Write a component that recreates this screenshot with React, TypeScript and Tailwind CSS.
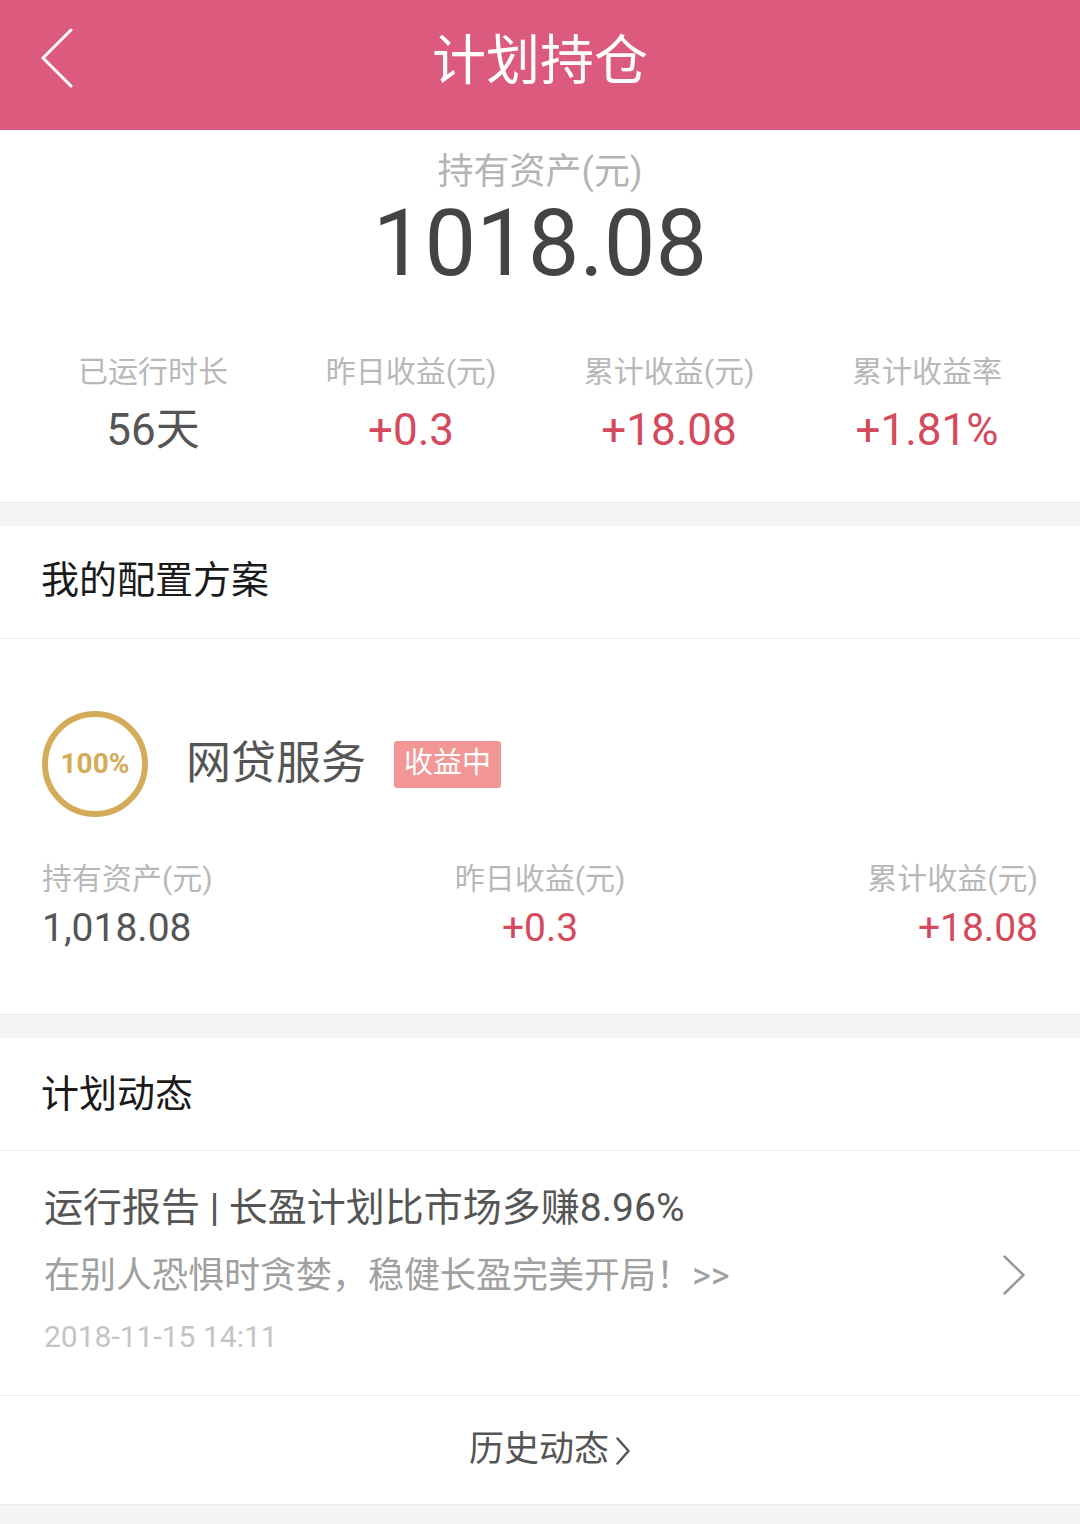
import React from "react";

const stats = [
  { label: "已运行时长", value: "56天", red: false },
  { label: "昨日收益(元)", value: "+0.3", red: true },
  { label: "累计收益(元)", value: "+18.08", red: true },
  { label: "累计收益率", value: "+1.81%", red: true },
];

const BackIcon = () => (
  <svg width="36" height="60" viewBox="0 0 36 60" fill="none">
    <path d="M31 2 L3 30 L31 58" stroke="#fff" strokeWidth="3" strokeLinecap="round" strokeLinejoin="round" />
  </svg>
);

const ChevronRight = ({ w, h, color, sw }: { w: number; h: number; color: string; sw: number }) => (
  <svg width={w} height={h} viewBox={`0 0 ${w} ${h}`} fill="none">
    <path
      d={`M${sw} ${sw} L${w - sw} ${h / 2} L${sw} ${h - sw}`}
      stroke={color}
      strokeWidth={sw}
      strokeLinecap="round"
      strokeLinejoin="round"
    />
  </svg>
);

export default function App() {
  return (
    <div className="w-[1080px] min-h-[1524px] bg-[#f4f4f4] font-['Roboto','Noto_Sans_CJK_SC',sans-serif]">
      {/* header */}
      <div className="relative h-[130px] bg-[#dc5a7e] flex items-center justify-center">
        <div className="absolute left-[40px] top-[28px]">
          <BackIcon />
        </div>
        <h1 className="text-[54px] leading-none text-white -mt-[6px]">计划持仓</h1>
      </div>

      {/* summary */}
      <div className="bg-white pt-[20px] pb-[44px] border-b border-[#ececec]">
        <p className="text-center text-[36px] leading-[44px] text-[#b4b4b4]">持有资产(元)</p>
        <p className="text-center text-[92px] leading-[100px] text-[#444]">1018.08</p>
        <div className="grid grid-cols-4 px-[24px] mt-[58px]">
          {stats.map((s) => (
            <div key={s.label} className="flex flex-col items-center">
              <span className="text-[30px] leading-[40px] text-[#b8b8b8]">{s.label}</span>
              <span className={`text-[44px] leading-[56px] mt-[10px] ${s.red ? "text-[#d44a5c]" : "text-[#555]"}`}>
                {s.value}
              </span>
            </div>
          ))}
        </div>
      </div>

      <div className="h-[23px]" />

      {/* my plan */}
      <div className="bg-white border-b border-[#ececec]">
        <div className="h-[113px] px-[41px] flex items-center border-b border-[#ececec]">
          <h2 className="text-[38px] text-[#1a1a1a] -mt-[4px]">我的配置方案</h2>
        </div>
        <div className="px-[42px] pt-[72px] pb-[61px]">
          <div className="flex items-center h-[106px]">
            <div className="w-[106px] h-[106px] rounded-full border-[6px] border-[#d4ab58] flex items-center justify-center">
              <span className="text-[28px] font-bold text-[#d4ab58]">100%</span>
            </div>
            <span className="ml-[38px] text-[45px] text-[#555]">网贷服务</span>
            <span className="ml-[28px] h-[47px] px-[10px] rounded-[3px] bg-[#f29796] text-white text-[29px] flex items-center">
              收益中
            </span>
          </div>
          <div className="grid grid-cols-3 mt-[42px]">
            <div className="flex flex-col items-start">
              <span className="text-[30px] leading-[40px] text-[#b8b8b8]">持有资产(元)</span>
              <span className="text-[39px] leading-[50px] mt-[4px] text-[#555]">1,018.08</span>
            </div>
            <div className="flex flex-col items-center">
              <span className="text-[30px] leading-[40px] text-[#b8b8b8]">昨日收益(元)</span>
              <span className="text-[39px] leading-[50px] mt-[4px] text-[#d44a5c]">+0.3</span>
            </div>
            <div className="flex flex-col items-end">
              <span className="text-[30px] leading-[40px] text-[#b8b8b8]">累计收益(元)</span>
              <span className="text-[39px] leading-[50px] mt-[4px] text-[#d44a5c]">+18.08</span>
            </div>
          </div>
        </div>
      </div>

      <div className="h-[23px]" />

      {/* plan news */}
      <div className="bg-white border-b border-[#ececec]">
        <div className="h-[113px] px-[41px] flex items-center border-b border-[#ececec]">
          <h2 className="text-[38px] text-[#1a1a1a]">计划动态</h2>
        </div>
        <div className="flex items-center pl-[44px] pr-[54px] pt-[32px] pb-[40px] border-b border-[#ececec]">
          <div className="flex-1 flex flex-col">
            <span className="text-[39px] leading-[50px] text-[#555]">运行报告 | 长盈计划比市场多赚8.96%</span>
            <span className="text-[36px] leading-[46px] mt-[20px] text-[#a0a0a0]">
              在别人恐惧时贪婪，稳健长盈完美开局！&gt;&gt;
            </span>
            <span className="text-[30px] leading-[36px] mt-[20px] text-[#c4c4c4]">2018-11-15 14:11</span>
          </div>
          <span className="mt-[12px]">
            <ChevronRight w={24} h={42} color="#999" sw={2.5} />
          </span>
        </div>
        <div className="h-[108px] flex items-center justify-center">
          <span className="text-[35px] text-[#555] ml-[20px]">历史动态</span>
          <span className="ml-[6px] mt-[2px]">
            <ChevronRight w={16} h={30} color="#555" sw={2.5} />
          </span>
        </div>
      </div>
    </div>
  );
}
